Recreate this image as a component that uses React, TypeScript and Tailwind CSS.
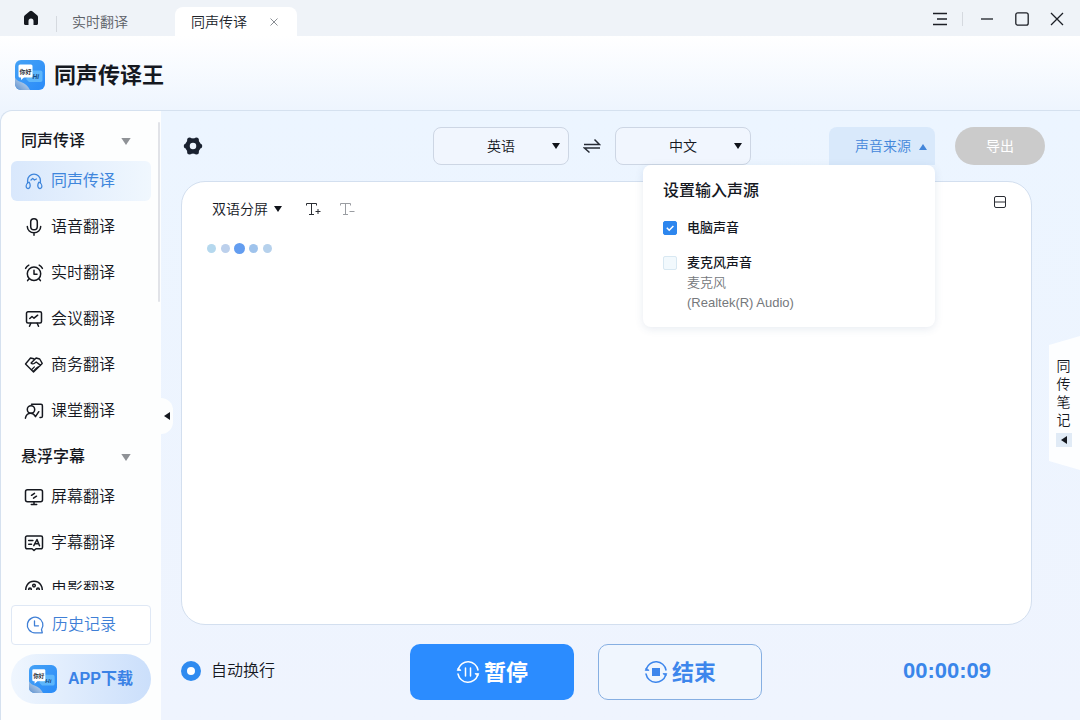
import React, { useState } from 'react';

type IconProps = { className?: string };

const Icon: React.FC<{ className?: string; children: React.ReactNode }> = ({ className = 'size-5', children }) => (
  <svg
    viewBox="0 0 20 20"
    fill="none"
    stroke="currentColor"
    strokeWidth="1.5"
    strokeLinecap="round"
    strokeLinejoin="round"
    className={className}
    aria-hidden="true"
  >
    {children}
  </svg>
);

const Triangle: React.FC<{ className?: string; up?: boolean }> = ({ className = 'w-2 h-1.5', up }) => (
  <svg viewBox="0 0 8 6" fill="currentColor" className={className} aria-hidden="true">
    <path d={up ? 'M4 0L8 6H0z' : 'M0 0h8L4 6z'} />
  </svg>
);

const LeftTriangle = () => (
  <svg viewBox="0 0 6 8" fill="currentColor" className="w-1.5 h-2" aria-hidden="true">
    <path d="M6 0v8L0 4z" />
  </svg>
);

const AppLogo: React.FC<IconProps> = ({ className }) => (
  <svg viewBox="0 0 30 30" className={className} aria-hidden="true">
    <defs>
      <linearGradient id="logoBg" x1="0" y1="0" x2="1" y2="1">
        <stop offset="0" stopColor="#45a2f6" />
        <stop offset="1" stopColor="#2a8bf8" />
      </linearGradient>
      <linearGradient id="logoFold" x1="0" y1="1" x2="1" y2="0">
        <stop offset="0" stopColor="#5e8fca" />
        <stop offset="1" stopColor="#dcebfb" />
      </linearGradient>
    </defs>
    <rect width="30" height="30" rx="6" fill="url(#logoBg)" />
    <path d="M0 17.500c1 2 3 3.500 6 4.500 4 1.500 7 4 9 8H6a6 6 0 0 1-6-6z" fill="url(#logoFold)" />
    <path d="M17 10.500h8.500a2 2 0 0 1 2 2V20a2 2 0 0 1-2 2H14l-3-3z" fill="#5db6fb" />
    <path d="M5 4.500h11a1.500 1.500 0 0 1 1.500 1.500v10a1.500 1.500 0 0 1-1.500 1.500H9L6 20v-2.500H5A1.500 1.500 0 0 1 3.500 16V6A1.500 1.500 0 0 1 5 4.500z" fill="#fff" />
    <text x="4.500" y="13.500" fontSize="6" fontWeight="700" fill="#2a313b">你好</text>
    <text x="17.500" y="19" fontSize="6.500" fontWeight="700" fontStyle="italic" fill="#174a84">Hi</text>
  </svg>
);

const HeadphoneIcon = () => (
  <Icon>
    <path d="M3.600 12V9.500a6.400 6.400 0 0 1 12.800 0V12" strokeWidth="1.300" />
    <path d="M5.200 11.200c-1.900.6-3.300 2.800-3 4.700.3 1.700 2.200 2.100 3.200.9.900-1.100.7-3.900-.2-5.600zM14.800 11.200c1.900.6 3.300 2.800 3 4.700-.3 1.700-2.200 2.100-3.200.9-.9-1.100-.7-3.900.2-5.600z" strokeWidth="1.300" />
    <path d="M7 9l1.700-1.600L10.500 9l1.900-1" strokeWidth="1.300" />
  </Icon>
);

const MicIcon = () => (
  <Icon>
    <rect x="6.700" y="1.800" width="6.600" height="11" rx="3.300" />
    <path d="M3.300 9.500a6.700 6.300 0 0 0 13.400 0M10 15.800v2.400" />
  </Icon>
);

const AlarmIcon = () => (
  <Icon>
    <circle cx="10" cy="10.800" r="6.700" />
    <path d="M10 7.200v4h3M1.600 5.400a8 8 0 0 1 3.200-3.200M18.400 5.400a8 8 0 0 0-3.200-3.200M5.200 15.800l-1.600 1.800M14.800 15.800l1.600 1.800" />
  </Icon>
);

const BoardIcon = () => (
  <Icon>
    <rect x="2.500" y="2.800" width="15" height="11.200" rx="1.500" />
    <path d="M5.800 9.500l2.200-2 2 1.700 3.700-3M6.800 14.300l-1.300 3M13.200 14.300l1.300 3" />
  </Icon>
);

const HandshakeIcon = () => (
  <Icon>
    <path d="M9.800 3.800L6.500 3 1.500 9l8 8 8.700-8.600-2.500-4.400-3.600-1-5 5c.9 1.200 2.200 1.100 3.400.2l1.700-1.200 4.400 3.400" strokeWidth="1.400" />
    <path d="M7.800 14.500l2.600-2.600M9.600 15.800l3-3M11.700 14.200l2.300-2.200" strokeWidth="1.200" />
  </Icon>
);

const ClassIcon = () => (
  <Icon>
    <path d="M7.500 3.300H17a1.400 1.400 0 0 1 1.400 1.400v10.500a1.400 1.400 0 0 1-1.400 1.400h-1" />
    <circle cx="7" cy="8.500" r="3.700" />
    <path d="M1.400 17.200c.5-3 2.600-5 5.400-5 2.400 0 3.600 1.300 4.700 3.500l3.300-5" />
  </Icon>
);

const ScreenIcon = () => (
  <Icon>
    <rect x="1.500" y="2.800" width="17" height="12" rx="2" />
    <path d="M7.500 8.300l3-2M9.500 11.200l3-2M10 15v2M7.300 17.500h5.400" />
  </Icon>
);

const CaptionIcon = () => (
  <Icon>
    <path d="M3 3h14a1.500 1.500 0 0 1 1.500 1.500v9.800a1.500 1.500 0 0 1-1.500 1.500h-5L10 17.500l-2-1.700H3a1.500 1.500 0 0 1-1.500-1.500V4.500A1.500 1.500 0 0 1 3 3z" />
    <path d="M4.700 7.500h4.200M4.700 11.200h2.800M9.800 12.700l3.200-6.200 2.500 6.200M11.200 10.700h3.300" />
  </Icon>
);

const FilmIcon = () => (
  <Icon>
    <path d="M2.600 14a8.200 8.200 0 1 1 14.800 0" />
    <circle cx="10" cy="6.600" r="1.300" />
    <circle cx="6" cy="10.200" r="1.300" />
    <circle cx="14" cy="10.200" r="1.300" />
  </Icon>
);

const HistoryIcon = () => (
  <Icon>
    <path d="M16.500 14.500A7.800 7.800 0 1 0 10 17.800h7.300l-.8-3.300z" strokeWidth="1.300" />
    <path d="M9.500 6v4.800h4" strokeWidth="1.300" />
  </Icon>
);

const GearIcon = () => (
  <svg viewBox="0 0 20 20" className="size-5" fill="currentColor" aria-hidden="true">
    <circle cx="10" cy="10" r="5.500" fill="none" stroke="currentColor" strokeWidth="4.500" />
    <circle cx="3.300" cy="10" r="2.500" />
    <circle cx="16.700" cy="10" r="2.500" />
    <circle cx="6.600" cy="4" r="2.500" />
    <circle cx="13.400" cy="4" r="2.500" />
    <circle cx="6.600" cy="16" r="2.500" />
    <circle cx="13.400" cy="16" r="2.500" />
  </svg>
);

// two arcs with arrow heads, shared by the pause and the stop button
const CycleIcon: React.FC<{ children: React.ReactNode }> = ({ children }) => (
  <svg viewBox="0 0 24 24" fill="none" stroke="currentColor" strokeWidth="1.5" strokeLinecap="round" className="size-6" aria-hidden="true">
    <path d="M2.300 8.800A10.200 10.200 0 0 1 22 10M21.700 15.200A10.200 10.200 0 0 1 2 14" />
    <path d="M1.500 10.400h3.600L2.500 8.200zM22.500 13.600h-3.600l2.600 2.200z" fill="currentColor" strokeWidth=".8" />
    {children}
  </svg>
);

const navSections = [
  {
    title: '同声传译',
    items: [
      { label: '同声传译', icon: HeadphoneIcon },
      { label: '语音翻译', icon: MicIcon },
      { label: '实时翻译', icon: AlarmIcon },
      { label: '会议翻译', icon: BoardIcon },
      { label: '商务翻译', icon: HandshakeIcon },
      { label: '课堂翻译', icon: ClassIcon },
    ],
  },
  {
    title: '悬浮字幕',
    items: [
      { label: '屏幕翻译', icon: ScreenIcon },
      { label: '字幕翻译', icon: CaptionIcon },
      { label: '电影翻译', icon: FilmIcon },
    ],
  },
];

const languages = ['英语', '中文', '日语', '韩语'];

const TitleBar = () => (
  <div className="flex h-9 shrink-0 bg-[#eff3f8]">
    <button aria-label="首页" className="ml-4 flex w-[30px] items-center justify-center text-[#15181f]">
      <svg viewBox="0 0 16 16" fill="currentColor" className="size-4" aria-hidden="true">
        <path d="M8 .7c.5 0 .9.200 1.300.5l4.800 4c.6.5.9 1 .9 1.700v6.600c0 .9-.6 1.500-1.500 1.500h-3V11a2.500 2.500 0 0 0-5 0v4h-3C1.600 15 1 14.400 1 13.500V6.900c0-.7.3-1.200.9-1.700l4.800-4C7.100.9 7.500.7 8 .7z" />
      </svg>
    </button>
    <span className="mt-4 ml-2.5 h-4 w-px bg-[#d5d9df]" />
    <button className="w-[118px] pt-2 pl-[15px] text-left text-sm text-[#5c6067]">实时翻译</button>
    <div className="mt-[7px] flex w-[122px] items-center justify-between rounded-t-lg bg-white pr-[18px] pl-4 text-sm text-[#20242b]">
      <button>同声传译</button>
      <button aria-label="关闭标签" className="text-[#8a8e94]">
        <svg viewBox="0 0 10 10" stroke="currentColor" className="size-2.5" aria-hidden="true">
          <path d="M1.500 1.500l7 7M8.500 1.500l-7 7" />
        </svg>
      </button>
    </div>
    <div className="ml-auto flex items-center pt-0.5 pr-1.5 text-[#1c1f26]">
      <button aria-label="菜单" className="flex h-8 w-8 items-center justify-center">
        <svg viewBox="0 0 16 16" stroke="currentColor" strokeWidth="1.300" className="size-4" aria-hidden="true">
          <path d="M1 2.500h14M5 8h10M1 13.500h14" />
        </svg>
      </button>
      <span className="mx-1.5 h-3.5 w-px bg-[#d5d9df]" />
      <button aria-label="最小化" className="flex h-8 w-[35px] items-center justify-center">
        <svg viewBox="0 0 14 14" stroke="currentColor" strokeWidth="1.300" className="size-3.5" aria-hidden="true">
          <path d="M1 7h12" />
        </svg>
      </button>
      <button aria-label="最大化" className="flex h-8 w-[35px] items-center justify-center">
        <svg viewBox="0 0 14 14" fill="none" stroke="currentColor" strokeWidth="1.300" className="size-3.5" aria-hidden="true">
          <rect x=".8" y=".8" width="12.400" height="12.400" rx="2" />
        </svg>
      </button>
      <button aria-label="关闭" className="flex h-8 w-[35px] items-center justify-center">
        <svg viewBox="0 0 14 14" stroke="currentColor" strokeWidth="1.300" className="size-3.5" aria-hidden="true">
          <path d="M1 1l12 12M13 1L1 13" />
        </svg>
      </button>
    </div>
  </div>
);

const Sidebar = () => {
  const [active, setActive] = useState('同声传译');

  return (
    <aside className="relative flex w-40 shrink-0 flex-col rounded-tl-xl bg-[#fdfefe] pl-2.5">
      <div className="flex min-h-0 flex-1">
        <nav className="mr-[7px] flex flex-1 flex-col gap-1.5 overflow-hidden pt-2.5">
          {navSections.map((section) => (
            <div key={section.title} className="shrink-0">
              <button className="flex h-10 w-full items-center justify-between pr-5 pl-2.5 text-base font-medium text-[#15181f]">
                {section.title}
                <Triangle className="h-[7px] w-2.5 text-[#8f9296]" />
              </button>
              <ul className="flex flex-col gap-1.5">
                {section.items.map(({ label, icon: ItemIcon }) => (
                  <li key={label}>
                    <button
                      onClick={() => setActive(label)}
                      className={
                        active === label
                          ? 'flex h-10 w-full items-center gap-[7px] rounded-md bg-linear-to-r from-[#d9e8fc] to-[#f0f7fe] pl-[13px] text-base font-normal text-[#3f86dc]'
                          : 'flex h-10 w-full items-center gap-[7px] rounded-md pl-[13px] text-base text-[#15181f]'
                      }
                    >
                      <ItemIcon />
                      {label}
                    </button>
                  </li>
                ))}
              </ul>
            </div>
          ))}
        </nav>
        <span className="mt-[11px] mr-px h-[180px] w-0.5 rounded-full bg-[#e1e3e8]" />
      </div>
      <button className="mt-[15px] mr-2.5 flex h-10 shrink-0 items-center gap-[7px] rounded border border-[#dfe8f5] bg-white pl-[13px] text-base text-[#3f7fd6]">
        <HistoryIcon />
        历史记录
      </button>
      <button className="mt-[9px] mr-2.5 mb-4 flex h-[50px] shrink-0 items-center gap-[11px] rounded-full bg-linear-to-r from-[#eff6fe] to-[#cbdffb] pl-[18px] text-base font-bold text-[#3b82e6]">
        <AppLogo className="size-7" />
        APP下载
      </button>
      <button
        aria-label="收起侧栏"
        className="absolute top-[287px] left-full flex h-9 w-3 items-center justify-center rounded-r-xl bg-[#fdfefe] text-[#15181f]"
      >
        <LeftTriangle />
      </button>
    </aside>
  );
};

interface LanguageSelectProps {
  label: string;
  value: string;
  onChange: (value: string) => void;
}

const LanguageSelect: React.FC<LanguageSelectProps> = ({ label, value, onChange }) => (
  <div className="relative">
    <select
      aria-label={label}
      value={value}
      onChange={(e) => onChange(e.target.value)}
      className="h-[38px] w-[136px] appearance-none rounded-lg border border-[#cdd6e4] bg-[#f1f6fe] text-center text-sm text-[#15181f] [text-align-last:center]"
    >
      {languages.map((l) => (
        <option key={l}>{l}</option>
      ))}
    </select>
    <Triangle className="pointer-events-none absolute top-4 right-[9px] h-1.5 w-2 text-[#10131a]" />
  </div>
);

const SourceCheckbox: React.FC<{ id: string; checked: boolean; onChange: (v: boolean) => void }> = ({ id, checked, onChange }) => (
  <span className="grid size-3.5 place-items-center">
    <input
      id={id}
      type="checkbox"
      checked={checked}
      onChange={(e) => onChange(e.target.checked)}
      className="col-start-1 row-start-1 size-3.5 appearance-none rounded-xs border border-[#d8e8f2] bg-[#f2f9fd] checked:border-[#2d86ee] checked:bg-[#2d86ee]"
    />
    {checked && (
      <svg viewBox="0 0 14 14" fill="none" stroke="#fff" strokeWidth="1.500" className="pointer-events-none col-start-1 row-start-1 size-3.5" aria-hidden="true">
        <path d="M3.800 6.800l2.400 2.400 4.200-4.200" />
      </svg>
    )}
  </span>
);

const SourceMenu = () => {
  const [open, setOpen] = useState(true);
  const [computer, setComputer] = useState(true);
  const [mic, setMic] = useState(false);

  return (
    <div className="relative">
      <button
        onClick={() => setOpen(!open)}
        className="flex h-[38px] w-[106px] items-center justify-end gap-2 rounded-t-lg bg-[#d9e9fb] pr-2 text-sm text-[#4386da]"
      >
        声音来源
        <Triangle up className="mt-0.5 h-1.5 w-2" />
      </button>
      {open && (
        <div className="absolute top-full right-0 z-10 w-[292px] rounded-lg bg-white px-5 py-3.5 text-[13px] leading-5 shadow-[0_2px_8px_rgba(60,90,140,0.12)]">
          <h2 className="text-base leading-6 font-medium text-[#15181f]">设置输入声源</h2>
          <div className="mt-[15px] flex items-center gap-2.5">
            <SourceCheckbox id="src-computer" checked={computer} onChange={setComputer} />
            <label htmlFor="src-computer" className="font-medium text-[#15181f]">电脑声音</label>
          </div>
          <div className="mt-[15px] flex items-center gap-2.5">
            <SourceCheckbox id="src-mic" checked={mic} onChange={setMic} />
            <label htmlFor="src-mic" className="font-medium text-[#15181f]">麦克风声音</label>
          </div>
          <p className="pl-6 text-[#75787c]">
            麦克风
            <br />
            (Realtek(R) Audio)
          </p>
        </div>
      )}
    </div>
  );
};

const Toolbar = () => {
  const [from, setFrom] = useState('英语');
  const [to, setTo] = useState('中文');

  const swap = () => {
    setFrom(to);
    setTo(from);
  };

  return (
    <div className="mr-[35px] grid h-[38px] shrink-0 grid-cols-[6fr_auto_7fr] items-center">
      <button aria-label="设置" className="ml-0.5 w-5 text-[#1a2230]">
        <GearIcon />
      </button>
      <div className="flex items-center">
        <LanguageSelect label="源语言" value={from} onChange={setFrom} />
        <button aria-label="交换语言" onClick={swap} className="flex w-[46px] justify-center text-[#262b34]">
          <svg viewBox="0 0 18 16" fill="none" stroke="currentColor" strokeWidth="1.500" className="h-4 w-[18px]" aria-hidden="true">
            <path d="M1 6.500h15.500L11.500 1.500M17 10H1.500l5 4.500" />
          </svg>
        </button>
        <LanguageSelect label="目标语言" value={to} onChange={setTo} />
      </div>
      <div className="flex justify-end gap-5">
        <SourceMenu />
        <button className="h-[38px] w-[90px] rounded-full bg-[#cbcbcb] text-sm font-normal text-white">导出</button>
      </div>
    </div>
  );
};

const TranscriptPanel = () => (
  <section className="flex-1 rounded-3xl border border-[#d3dfef] bg-white pt-2.5 pr-[21px] pl-[25px]">
    <div className="flex items-start justify-between">
      <div className="mt-[5px] flex h-6 items-center pl-[5px]">
        <div className="relative">
          <select aria-label="显示模式" className="h-6 w-[70px] appearance-none text-sm text-[#15181f]">
            <option>双语分屏</option>
            <option>仅译文</option>
          </select>
          <Triangle className="pointer-events-none absolute top-[9px] right-0 h-1.5 w-2 text-[#10131a]" />
        </div>
        <button aria-label="放大字号" className="ml-6 text-[#2a2d33]">
          <svg viewBox="0 0 16 14" fill="none" stroke="currentColor" className="h-3.5 w-4" aria-hidden="true">
            <path d="M.5 3.500v-2h10v2M5.500 1.500v11M3 12.500h5M9.500 9.500h5M12 7v5" />
          </svg>
        </button>
        <button aria-label="缩小字号" className="ml-[18px] text-[#9a9da2]">
          <svg viewBox="0 0 16 14" fill="none" stroke="currentColor" className="h-3.5 w-4" aria-hidden="true">
            <path d="M.5 3.500v-2h10v2M5.500 1.500v11M3 12.500h5M9.500 9.500h5" />
          </svg>
        </button>
      </div>
      <button aria-label="切换布局" className="flex size-5 items-center justify-center text-[#2a2d33]">
        <svg viewBox="0 0 12 12" fill="none" stroke="currentColor" className="size-3" aria-hidden="true">
          <rect x=".5" y=".5" width="11" height="11" rx="1.500" />
          <path d="M0 6h12" />
        </svg>
      </button>
    </div>
    <div className="mt-[22px] flex h-[11px] items-center gap-[5px]">
      <span className="size-[9px] rounded-full bg-[#b5d8ee]" />
      <span className="size-[9px] rounded-full bg-[#bcd0ec]" />
      <span className="-mx-px size-[11px] rounded-full bg-[#639df0]" />
      <span className="size-[9px] rounded-full bg-[#9fc3ec]" />
      <span className="size-[9px] rounded-full bg-[#b6d1ec]" />
    </div>
  </section>
);

const NotesTab = () => (
  <div className="flex w-12 shrink-0 items-center justify-end">
    <button className="flex h-[134px] w-[31px] flex-col items-center justify-center rounded-l-lg bg-[#fdfeff] pr-0.5 pb-0.5 text-sm leading-[18px] text-[#15181f] [clip-path:polygon(0_9px,100%_0,100%_100%,0_125px)]">
      <span className="w-3.5">同传笔记</span>
      <span className="mt-1 flex h-3.5 w-4 items-center justify-center bg-[#e1ebf6]">
        <LeftTriangle />
      </span>
    </button>
  </div>
);

const ControlBar = () => {
  const [paused, setPaused] = useState(false);
  const [wrap, setWrap] = useState(true);

  return (
    <div className="mt-[19px] mr-[89px] grid h-14 shrink-0 grid-cols-[1fr_auto_1fr] items-center">
      <label className="flex items-center gap-2.5 pb-0.5 text-base text-[#15181f]">
        <input
          type="radio"
          checked={wrap}
          onClick={() => setWrap(!wrap)}
          readOnly
          className="size-5 appearance-none rounded-full border border-[#b7c6da] bg-white checked:border-6 checked:border-[#2f8bf0]"
        />
        自动换行
      </label>
      <div className="flex gap-6">
        <button
          onClick={() => setPaused(!paused)}
          className="flex h-14 w-[164px] items-center justify-center gap-1 rounded-[10px] bg-[#2b8cff] text-[22px] font-bold text-white"
        >
          <CycleIcon>
            <path d={paused ? 'M10 8l5 4-5 4z' : 'M9.500 8v8M14.500 8v8'} />
          </CycleIcon>
          {paused ? '继续' : '暂停'}
        </button>
        <button className="flex h-14 w-[164px] items-center justify-center gap-1 rounded-[10px] border border-[#86afe2] bg-[#f0f6fe] text-[22px] font-bold text-[#3d86ec]">
          <CycleIcon>
            <rect x="8" y="8" width="8" height="8" fill="currentColor" stroke="none" />
          </CycleIcon>
          结束
        </button>
      </div>
      <time className="pb-1 text-right text-[22px] font-bold text-[#3a86ea]">00:00:09</time>
    </div>
  );
};

const App = () => (
  <div className="flex h-screen flex-col overflow-hidden bg-[#eef5fe] font-['Liberation_Sans','Noto_Sans_CJK_SC',sans-serif] font-[350]">
    <TitleBar />
    <header className="flex h-[74px] shrink-0 items-center gap-[9px] bg-linear-to-b from-white to-[#eef5fe] pt-1 pl-[15px]">
      <AppLogo className="size-[30px]" />
      <h1 className="text-[22px] font-bold text-[#15181f]">同声传译王</h1>
    </header>
    <div className="flex min-h-0 flex-1 rounded-tl-xl border-t border-l border-[#d5e1ef]">
      <Sidebar />
      <main className="flex min-w-0 flex-1 flex-col bg-linear-to-b from-[#ecf5ff] to-[#eff4fe] pt-4 pb-5 pl-5">
        <Toolbar />
        <div className="mt-4 flex min-h-0 flex-1">
          <TranscriptPanel />
          <NotesTab />
        </div>
        <ControlBar />
      </main>
    </div>
  </div>
);

export default App;
